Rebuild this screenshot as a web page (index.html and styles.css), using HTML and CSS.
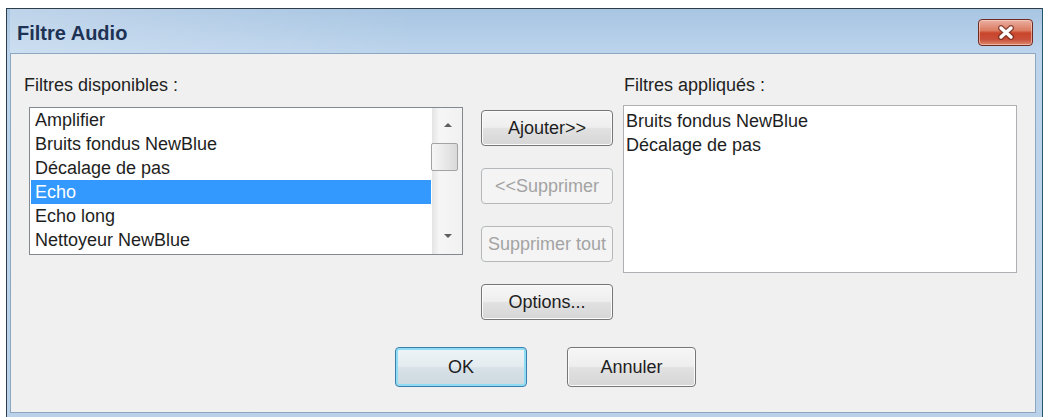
FILE: index.html
```html
<!DOCTYPE html>
<html lang="fr">
<head>
    <meta charset="UTF-8">
    <meta name="viewport" content="width=device-width, initial-scale=1.0">
    <title>Filtre Audio</title>
    <link rel="stylesheet" href="styles.css">
</head>
<body>
    <div class="window">
        <div class="titlebar">
            <span class="title">Filtre Audio</span>
            <button class="close" title="Fermer">
                <svg width="18" height="15" viewBox="0 0 18 15">
                    <path d="M4 3 L14 12 M14 3 L4 12" stroke="#6a2a1e" stroke-width="6" stroke-linecap="round" fill="none" opacity="0.7"/>
                    <path d="M4 3 L14 12 M14 3 L4 12" stroke="#ffffff" stroke-width="3.4" stroke-linecap="round" fill="none"/>
                </svg>
            </button>
        </div>
        <div class="client">
            <div class="lists">
                <div class="col-left">
                    <div class="label">Filtres disponibles :</div>
                    <div class="listbox available">
                        <ul class="items">
                            <li>Amplifier</li>
                            <li>Bruits fondus NewBlue</li>
                            <li>Décalage de pas</li>
                            <li class="selected">Echo</li>
                            <li>Echo long</li>
                            <li>Nettoyeur NewBlue</li>
                        </ul>
                        <div class="scrollbar">
                            <div class="arrow-area top"><span class="arrow up"></span></div>
                            <div class="thumb"></div>
                            <div class="track-rest"></div>
                            <div class="arrow-area bottom"><span class="arrow down"></span></div>
                        </div>
                    </div>
                </div>
                <div class="actions">
                    <button class="btn">Ajouter&gt;&gt;</button>
                    <button class="btn" disabled>&lt;&lt;Supprimer</button>
                    <button class="btn" disabled>Supprimer tout</button>
                    <button class="btn">Options...</button>
                </div>
                <div class="col-right">
                    <div class="label">Filtres appliqués :</div>
                    <div class="listbox applied">
                        <ul class="items">
                            <li>Bruits fondus NewBlue</li>
                            <li>Décalage de pas</li>
                        </ul>
                    </div>
                </div>
            </div>
            <div class="footer">
                <button class="btn ok">OK</button>
                <button class="btn cancel">Annuler</button>
            </div>
        </div>
    </div>
</body>
</html>
```

FILE: styles.css
```css
body {
    margin: 0;
    padding: 0;
    background: #ffffff;
    font-family: "Liberation Sans", Arial, sans-serif;
    overflow: hidden;
}

.window {
    margin: 8px 0 0 6px;
    width: 1037px;
    height: 410px;
    box-sizing: border-box;
    border: 1px solid #2f3d4b;
    border-right-color: #24586a;
    background: linear-gradient(#a8c5e2, #bcd4ec 44px, #b9d2ea);
    padding: 0 6px 4px 3px;
    display: flex;
    flex-direction: column;
}

.titlebar {
    height: 44px;
    display: flex;
    align-items: flex-start;
    justify-content: space-between;
    flex-shrink: 0;
    background: linear-gradient(to right, rgba(255, 255, 255, 0.25), rgba(255, 255, 255, 0) 40%);
}

.title {
    margin: 12px 0 0 7px;
    font-size: 20px;
    line-height: 24px;
    font-weight: bold;
    color: #1d3254;
}

.close {
    margin: 10px 3px 0 0;
    width: 55px;
    height: 27px;
    padding: 0;
    border: 1px solid #6e2b21;
    border-radius: 4px;
    background: linear-gradient(#eab0a2 0%, #dc7b62 42%, #c8452a 52%, #c9503a 78%, #de8a70 100%);
    box-shadow: inset 0 0 0 1px rgba(255, 220, 205, 0.55);
    display: flex;
    align-items: center;
    justify-content: center;
}

.client {
    flex: 1;
    background: #f0f0f0;
    border: 1px solid #8da7c3;
    padding: 20px 0 0 13px;
}

.lists {
    display: flex;
    align-items: flex-start;
}

.label {
    font-size: 18px;
    line-height: 22px;
    color: #222;
}

.col-left .listbox {
    margin: 11px 0 0 5px;
}

.col-right {
    margin-left: 10px;
}

.col-right .label {
    padding-left: 1px;
}

.col-right .listbox {
    margin-top: 9px;
}

.listbox {
    background: #ffffff;
    box-sizing: border-box;
    display: flex;
}

.available {
    width: 434px;
    height: 148px;
    border: 1px solid #84888f;
}

.applied {
    width: 394px;
    height: 168px;
    border: 1px solid #aeb0b4;
}

.items {
    list-style: none;
    margin: 0;
    padding: 0;
    flex: 1;
    font-size: 18px;
    color: #1e1e1e;
}

.available .items {
    margin: 0 1px;
}

.available .items li {
    height: 24px;
    line-height: 24px;
    padding-left: 4px;
    white-space: nowrap;
}

.applied .items {
    padding-top: 4px;
}

.applied .items li {
    height: 23.5px;
    line-height: 23.5px;
    padding-left: 2px;
}

.items li.selected {
    background: #3399ff;
    color: #ffffff;
}

.scrollbar {
    width: 30px;
    display: flex;
    flex-direction: column;
    background: linear-gradient(to right, #e4e4e4, #f6f6f6 25%, #f1f1f1);
}

.arrow-area {
    display: flex;
    align-items: center;
    justify-content: center;
}

.arrow-area.top {
    height: 34px;
}

.arrow-area.bottom {
    height: 36px;
}

.arrow {
    width: 0;
    height: 0;
    border-left: 4px solid transparent;
    border-right: 4px solid transparent;
    margin-left: 1px;
}

.arrow.up {
    border-bottom: 4px solid #5e5e5e;
}

.arrow.down {
    border-top: 4px solid #5e5e5e;
}

.thumb {
    margin: 1px 0 0 -1px;
    width: 27px;
    height: 28px;
    box-sizing: border-box;
    border: 1px solid #a3a3a3;
    border-radius: 2px;
    background: linear-gradient(to right, #f6f6f6, #e6e6e6 60%, #d9d9d9);
}

.track-rest {
    flex: 1;
}

.actions {
    margin-left: 18px;
    padding-top: 36px;
    width: 132px;
    display: flex;
    flex-direction: column;
    gap: 22px;
}

.btn {
    height: 36px;
    padding: 0;
    font-family: "Liberation Sans", Arial, sans-serif;
    font-size: 18px;
    color: #1e1e1e;
    border: 1px solid #767676;
    border-radius: 4px;
    background: linear-gradient(#f6f6f6 0%, #eeeeee 48%, #e1e1e1 52%, #d6d6d6 100%);
    box-shadow: inset 0 0 0 1px #fbfbfb;
    white-space: nowrap;
}

.btn:disabled {
    color: #a3a3a3;
    border-color: #b5b8ba;
    background: #f4f4f4;
    box-shadow: none;
}

.footer {
    margin-top: 27px;
    padding-left: 371px;
    display: flex;
    gap: 40px;
}

.footer .btn {
    height: 40px;
}

.ok {
    width: 132px;
    border-color: #3a7eae;
    background: linear-gradient(#eef4f7 0%, #e4ecf0 48%, #d7e1e7 52%, #ccd8df 100%);
    box-shadow: inset 0 0 0 2px #8fdcf3;
}

.cancel {
    width: 129px;
}
```
